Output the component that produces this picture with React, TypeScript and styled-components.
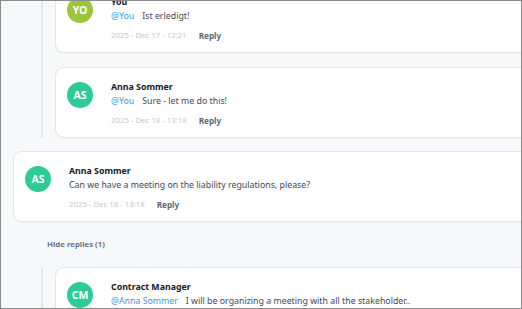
import { createGlobalStyle, styled } from "styled-components";

const GlobalStyle = createGlobalStyle`
  html, body {
    margin: 0;
    padding: 0;
    background: #ffffff;
  }
  body {
    font-family: "Segoe UI", "Noto Sans", "Open Sans", sans-serif;
  }
`;

const Frame = styled.div`
  width: 522px;
  height: 309px;
  box-sizing: border-box;
  border: 1px solid #8c8c8c;
  background: #f7f8fa;
  overflow: hidden;
`;

// scrolled list, first thread's parent is above the fold
const List = styled.div`
  width: 600px;
  margin-top: -19px;
  padding-left: 12px;
  display: flex;
  flex-direction: column;
  gap: 13px;
`;

const Thread = styled.div`
  display: flex;
  flex-direction: column;
`;

const Replies = styled.div`
  margin-left: 28px;
  border-left: 2px solid #dce8f6;
  padding-left: 12px;
  display: flex;
  flex-direction: column;
  gap: 14px;
`;

const Card = styled.div`
  display: flex;
  gap: 18px;
  padding: 12px 11px 10px;
  background: #ffffff;
  border: 1px solid #e3e5e9;
  border-radius: 9px;
  box-shadow: 0 1px 2px rgba(20, 30, 50, 0.04);
`;

const Avatar = styled.div<{ $color: string }>`
  flex: none;
  width: 26px;
  height: 26px;
  margin-top: 2px;
  border-radius: 50%;
  background: ${(p) => p.$color};
  color: #ffffff;
  font-size: 10.5px;
  font-weight: 700;
  display: flex;
  align-items: center;
  justify-content: center;
`;

const Body = styled.div`
  display: flex;
  flex-direction: column;
`;

const Name = styled.div`
  font-size: 8.8px;
  font-weight: 700;
  line-height: 14px;
  color: #161a22;
`;

const Message = styled.div`
  font-size: 8.8px;
  line-height: 15px;
  color: #434954;
`;

const Mention = styled.span`
  color: #3a9be0;
  margin-right: 8px;
`;

const Meta = styled.div`
  margin-top: 4px;
  display: flex;
  align-items: center;
  gap: 12px;
  line-height: 14px;
`;

const Date = styled.span`
  font-size: 7.8px;
  color: #c3c7ce;
`;

const ReplyButton = styled.button`
  border: 0;
  padding: 0;
  background: transparent;
  font-family: inherit;
  font-size: 8.2px;
  font-weight: 700;
  color: #5e687a;
  cursor: pointer;
`;

const HideReplies = styled.button`
  align-self: flex-start;
  margin: 15px 0 16px 34px;
  border: 0;
  padding: 0;
  background: transparent;
  font-family: inherit;
  font-size: 7.8px;
  font-weight: 700;
  line-height: 14px;
  color: #6a7487;
  cursor: pointer;
`;

interface IComment {
  initials: string;
  color: string;
  name: string;
  mention?: string;
  text: string;
  date: string;
}

const GREEN = "#2ccb97";
const LIME = "#9cc43c";

function Comment({ initials, color, name, mention, text, date }: IComment) {
  return (
    <Card>
      <Avatar $color={color}>{initials}</Avatar>
      <Body>
        <Name>{name}</Name>
        <Message>
          {mention && <Mention>@{mention}</Mention>}
          {text}
        </Message>
        <Meta>
          <Date>{date}</Date>
          <ReplyButton>Reply</ReplyButton>
        </Meta>
      </Body>
    </Card>
  );
}

export default function App() {
  return (
    <>
      <GlobalStyle />
      <Frame>
        <List>
          <Replies>
            <Comment
              initials="YO"
              color={LIME}
              name="You"
              mention="You"
              text="Ist erledigt!"
              date="2025 - Dec 17 - 12:21"
            />
            <Comment
              initials="AS"
              color={GREEN}
              name="Anna Sommer"
              mention="You"
              text="Sure - let me do this!"
              date="2025 - Dec 18 - 13:18"
            />
          </Replies>
          <Thread>
            <Comment
              initials="AS"
              color={GREEN}
              name="Anna Sommer"
              text="Can we have a meeting on the liability regulations, please?"
              date="2025 - Dec 18 - 13:18"
            />
            <HideReplies>Hide replies (1)</HideReplies>
            <Replies>
              <Comment
                initials="CM"
                color={GREEN}
                name="Contract Manager"
                mention="Anna Sommer"
                text="I will be organizing a meeting with all the stakeholder.."
                date="2025 - Dec 19 - 09:02"
              />
            </Replies>
          </Thread>
        </List>
      </Frame>
    </>
  );
}
